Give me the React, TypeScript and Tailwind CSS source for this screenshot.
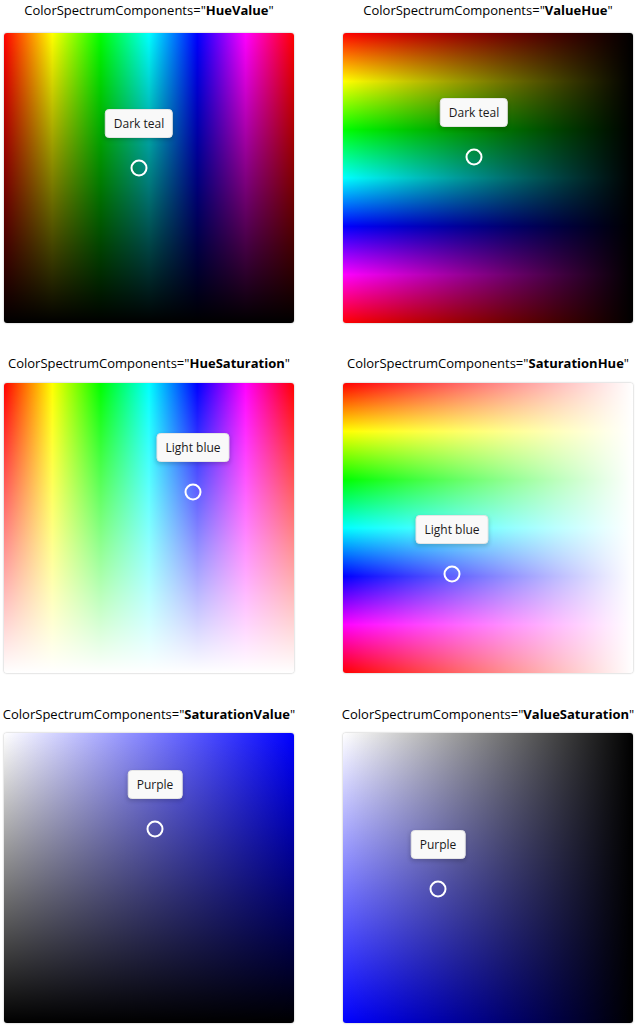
import React from "react";

type Panel = {
  prefix: string;
  bold: string;
  bg: string;
  ring: [number, number];
  tip: string;
};

const rows: { mt: string; panelMt: string; items: Panel[] }[] = [
  {
    mt: "mt-0",
    panelMt: "mt-[13px]",
    items: [
      {
        prefix: "ColorSpectrumComponents=\"",
        bold: "HueValue",
        bg: "bg-[linear-gradient(to_bottom,rgba(0,0,0,0),#000),linear-gradient(to_right,#f00,#ff0,#0f0,#0ff,#00f,#f0f,#f00)]",
        ring: [135, 135],
        tip: "Dark teal",
      },
      {
        prefix: "ColorSpectrumComponents=\"",
        bold: "ValueHue",
        bg: "bg-[linear-gradient(to_right,rgba(0,0,0,0),#000),linear-gradient(to_bottom,#f00,#ff0,#0f0,#0ff,#00f,#f0f,#f00)]",
        ring: [131, 124],
        tip: "Dark teal",
      },
    ],
  },
  {
    mt: "mt-[30px]",
    panelMt: "mt-[10px]",
    items: [
      {
        prefix: "ColorSpectrumComponents=\"",
        bold: "HueSaturation",
        bg: "bg-[linear-gradient(to_bottom,rgba(255,255,255,0),#fff),linear-gradient(to_right,#f00,#ff0,#0f0,#0ff,#00f,#f0f,#f00)]",
        ring: [189, 109],
        tip: "Light blue",
      },
      {
        prefix: "ColorSpectrumComponents=\"",
        bold: "SaturationHue",
        bg: "bg-[linear-gradient(to_right,rgba(255,255,255,0),#fff),linear-gradient(to_bottom,#f00,#ff0,#0f0,#0ff,#00f,#f0f,#f00)]",
        ring: [109, 191],
        tip: "Light blue",
      },
    ],
  },
  {
    mt: "mt-[31px]",
    panelMt: "mt-[9px]",
    items: [
      {
        prefix: "ColorSpectrumComponents=\"",
        bold: "SaturationValue",
        bg: "bg-[linear-gradient(to_bottom,rgba(0,0,0,0),#000),linear-gradient(to_right,#fff,#00f)]",
        ring: [151, 96],
        tip: "Purple",
      },
      {
        prefix: "ColorSpectrumComponents=\"",
        bold: "ValueSaturation",
        bg: "bg-[linear-gradient(to_right,rgba(0,0,0,0),#000),linear-gradient(to_bottom,#fff,#00f)]",
        ring: [95, 156],
        tip: "Purple",
      },
    ],
  },
];

function SpectrumPanel({ p, panelMt }: { p: Panel; panelMt: string }) {
  return (
    <div className="flex w-[290px] flex-col items-center">
      <div className="h-5 whitespace-nowrap text-[13px] leading-5 text-black">
        {p.prefix}
        <span className="font-bold">{p.bold}</span>"
      </div>
      <div
        className={`relative h-[290px] w-[290px] rounded-[3px] shadow-[0_0_2px_rgba(0,0,0,0.35)] ${panelMt} ${p.bg}`}
      >
        <div
          className="absolute flex -translate-x-1/2 -translate-y-full items-center justify-center whitespace-nowrap rounded-[4px] border border-[#e5e5e5] bg-[#f9f9f9] px-2 h-[29px] text-[12px] text-[#1a1a1a] shadow-[0_2px_4px_rgba(0,0,0,0.18)]"
          style={{ left: p.ring[0], top: p.ring[1] - 30 }}
        >
          {p.tip}
        </div>
        <div
          className="absolute h-[17px] w-[17px] -translate-x-1/2 -translate-y-1/2 rounded-full border-2 border-white"
          style={{ left: p.ring[0], top: p.ring[1] }}
        />
      </div>
    </div>
  );
}

export default function App() {
  return (
    <div
      className="h-[1028px] w-[636px] overflow-hidden bg-white pl-[4px]"
      style={{ fontFamily: '"Open Sans", "Noto Sans", sans-serif' }}
    >
      {rows.map((row, i) => (
        <div key={i} className={`flex gap-[49px] ${row.mt}`}>
          {row.items.map((p, j) => (
            <SpectrumPanel key={j} p={p} panelMt={row.panelMt} />
          ))}
        </div>
      ))}
    </div>
  );
}
